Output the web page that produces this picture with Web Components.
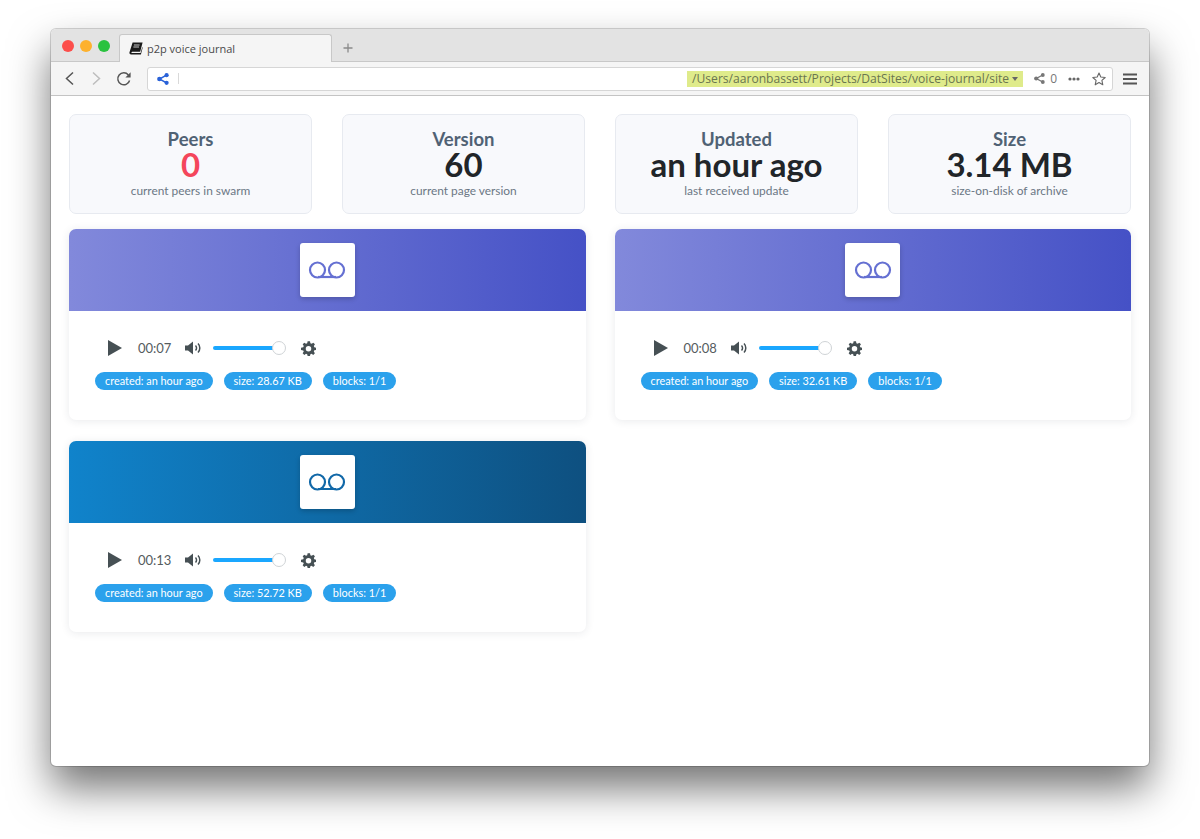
<!DOCTYPE html>
<html>
<head>
<meta charset="utf-8">
<title>p2p voice journal</title>
<style>
    html, body { margin: 0; height: 100%; background: #ffffff; overflow: hidden; }
    body { padding: 29px 51px 0; box-sizing: border-box; font-family: Lato, sans-serif; }
</style>
</head>
<body>
<browser-window>
    <stats-row>
        <stat-card heading="Peers" value="0" note="current peers in swarm" danger></stat-card>
        <stat-card heading="Version" value="60" note="current page version"></stat-card>
        <stat-card heading="Updated" value="an hour ago" note="last received update"></stat-card>
        <stat-card heading="Size" value="3.14 MB" note="size-on-disk of archive"></stat-card>
    </stats-row>
    <entry-list>
        <voice-entry time="00:07" size="28.67 KB" from="#8289db" to="#4551c6" ink="#6570d2"></voice-entry>
        <voice-entry time="00:08" size="32.61 KB" from="#8289db" to="#4551c6" ink="#6570d2"></voice-entry>
        <voice-entry time="00:13" size="52.72 KB" from="#1083cb" to="#0e5080" ink="#1168a8"></voice-entry>
    </entry-list>
</browser-window>

<script>
class BrowserWindow extends HTMLElement {
    constructor() {
        super();
        this.attachShadow({ mode: 'open' });
    }

    connectedCallback() {
        this.shadowRoot.innerHTML = `
            <style>
                :host {
                    display: flex;
                    flex-direction: column;
                    width: 1098px;
                    height: 737px;
                    background: #ffffff;
                    border-radius: 5px;
                    box-shadow: 0 0 0 1px rgba(0, 0, 0, 0.16), 0 22px 42px rgba(0, 0, 0, 0.55);
                    font-family: Lato, sans-serif;
                    overflow: hidden;
                }
                * { box-sizing: border-box; }
                svg { display: block; }

                .tabbar {
                    position: relative;
                    display: flex;
                    align-items: flex-end;
                    height: 33px;
                    flex: none;
                    padding-left: 11px;
                    background: #e3e3e3;
                    border-bottom: 1px solid #c8c8c8;
                }
                .lights { display: flex; gap: 6px; align-self: flex-start; margin-top: 11px; }
                .lights i { width: 12px; height: 12px; border-radius: 50%; }
                .tab {
                    display: flex;
                    align-items: center;
                    gap: 4px;
                    width: 213px;
                    height: 28px;
                    margin-left: 9px;
                    margin-bottom: -1px;
                    padding: 0 0 1px 9px;
                    background: #f5f5f5;
                    border: 1px solid #c8c8c8;
                    border-bottom: 0;
                    border-radius: 3px 3px 0 0;
                    font: 11px "Open Sans", sans-serif;
                    color: #4a4a4a;
                }
                .plus { margin: 0 0 8px 11px; }

                .toolbar {
                    display: flex;
                    align-items: center;
                    height: 34px;
                    flex: none;
                    padding: 0 12px 0 13px;
                    background: #f5f5f5;
                    border-bottom: 1px solid #c4c4c4;
                }
                .nav { display: flex; align-items: center; gap: 16px; }
                .nav .reload { margin-left: -2px; }
                .urlbar {
                    display: flex;
                    align-items: center;
                    width: 966px;
                    height: 24px;
                    margin-left: 15px;
                    padding: 0 6px 0 9px;
                    background: #ffffff;
                    border: 1px solid #d6d6d6;
                    border-radius: 3px;
                }
                .divider { width: 1px; height: 11px; margin-left: 9px; background: #d9d9d9; }
                .path {
                    display: flex;
                    align-items: center;
                    gap: 3px;
                    height: 16px;
                    margin-left: auto;
                    padding: 0 5px;
                    background: #dfeb8b;
                    font: 12.1px "Open Sans", sans-serif;
                    color: #6a7550;
                    white-space: nowrap;
                }
                .caret { width: 0; height: 0; border: 3.5px solid transparent; border-top: 4px solid #666; border-bottom: 0; }
                .url-actions { display: flex; align-items: center; margin-left: 11px; color: #777; font: 12px "Open Sans", sans-serif; }
                .count { margin-left: 5px; }
                .menu { margin-left: 10px; }

                .content { flex: 1; padding: 18px; overflow: hidden; }
                .content ::slotted(stats-row) { margin-bottom: 15px; }
            </style>
            <div class="tabbar">
                <div class="lights">
                    <i style="background:#fc4e4b"></i>
                    <i style="background:#fdb12d"></i>
                    <i style="background:#2ac23f"></i>
                </div>
                <div class="tab">
                    <svg width="14" height="13" viewBox="0 0 14 13">
                        <path d="M3.6 0.5H13.6L11.2 9.8H3.2C2.3 9.8 2.1 10.9 3 10.9H11.6L13.2 5.2L13.7 5.6L11.9 12.5H2.2C0.7 12.5 0.2 11.4 0.5 10.2Z" fill="#1a1a1a"/>
                        <path d="M4.9 3H10.6M4.4 5H10" stroke="#f5f5f5" stroke-width="0.8"/>
                    </svg>
                    <span>p2p voice journal</span>
                </div>
                <svg class="plus" width="10" height="10" viewBox="0 0 10 10"><path d="M5 0.5V9.5M0.5 5H9.5" stroke="#8a8a8a" stroke-width="1.3"/></svg>
            </div>
            <div class="toolbar">
                <div class="nav">
                    <svg width="11" height="15" viewBox="0 0 11 15"><path d="M9 1.5L2.5 7.5L9 13.5" fill="none" stroke="#555" stroke-width="1.5"/></svg>
                    <svg width="11" height="15" viewBox="0 0 11 15"><path d="M2 1.5L8.5 7.5L2 13.5" fill="none" stroke="#bdbdbd" stroke-width="1.5"/></svg>
                    <svg class="reload" width="16" height="16" viewBox="0 0 16 16"><path d="M13.6 9.5A6 6 0 1 1 12.4 3.9" fill="none" stroke="#555" stroke-width="1.5"/><path d="M14.6 1.2V6.4H9.4Z" fill="#555"/></svg>
                </div>
                <div class="urlbar">
                    <svg width="12" height="12" viewBox="0 0 12 12"><path d="M9.5 2.2L2.5 6L9.5 9.8" fill="none" stroke="#2a62d8" stroke-width="1.5"/><circle cx="9.6" cy="2.2" r="2.1" fill="#2a62d8"/><circle cx="2.4" cy="6" r="2.3" fill="#2a62d8"/><circle cx="9.6" cy="9.8" r="2.1" fill="#2a62d8"/></svg>
                    <span class="divider"></span>
                    <div class="path">/Users/aaronbassett/Projects/DatSites/voice-journal/site<span class="caret"></span></div>
                    <div class="url-actions">
                        <svg width="11" height="11" viewBox="0 0 12 12"><path d="M9.5 2.2L2.5 6L9.5 9.8" fill="none" stroke="#777" stroke-width="1.5"/><circle cx="9.6" cy="2.2" r="2.1" fill="#777"/><circle cx="2.4" cy="6" r="2.3" fill="#777"/><circle cx="9.6" cy="9.8" r="2.1" fill="#777"/></svg>
                        <span class="count">0</span>
                        <svg style="margin-left:11px" width="12" height="4" viewBox="0 0 12 4"><circle cx="2" cy="2" r="1.6" fill="#666"/><circle cx="6" cy="2" r="1.6" fill="#666"/><circle cx="10" cy="2" r="1.6" fill="#666"/></svg>
                        <svg style="margin-left:12px" width="14" height="14" viewBox="0 0 14 14"><path d="M7 1L8.8 5L13.2 5.5L9.9 8.4L10.8 12.8L7 10.6L3.2 12.8L4.1 8.4L0.8 5.5L5.2 5Z" fill="none" stroke="#666" stroke-width="1.1" stroke-linejoin="round"/></svg>
                    </div>
                </div>
                <svg class="menu" width="14" height="12" viewBox="0 0 14 12"><path d="M0 1.5H14M0 6H14M0 10.5H14" stroke="#555" stroke-width="2"/></svg>
            </div>
            <div class="content"><slot></slot></div>
        `;
    }
}

class StatsRow extends HTMLElement {
    constructor() {
        super();
        this.attachShadow({ mode: 'open' });
        this.shadowRoot.innerHTML = `
            <style>
                :host { display: grid; grid-template-columns: repeat(4, 1fr); column-gap: 30px; }
            </style>
            <slot></slot>
        `;
    }
}

class StatCard extends HTMLElement {
    constructor() {
        super();
        this.attachShadow({ mode: 'open' });
    }

    connectedCallback() {
        const heading = this.getAttribute('heading');
        const value = this.getAttribute('value');
        const note = this.getAttribute('note');
        const color = this.hasAttribute('danger') ? '#f4465b' : '#212529';
        this.shadowRoot.innerHTML = `
            <style>
                :host {
                    display: flex;
                    flex-direction: column;
                    align-items: center;
                    box-sizing: border-box;
                    height: 100px;
                    padding-top: 14px;
                    background: #f8f9fc;
                    border: 1px solid #e7eaf0;
                    border-radius: 7px;
                    font-family: Lato, sans-serif;
                }
                .heading { font-size: 18.5px; line-height: 21px; font-weight: 700; color: #506274; }
                .value { font-size: 33px; line-height: 29px; font-weight: 700; color: ${color}; }
                .note { margin-top: 4px; font-size: 11.9px; line-height: 15px; color: #6b7784; }
            </style>
            <div class="heading">${heading}</div>
            <div class="value">${value}</div>
            <div class="note">${note}</div>
        `;
    }
}

class EntryList extends HTMLElement {
    constructor() {
        super();
        this.attachShadow({ mode: 'open' });
        this.shadowRoot.innerHTML = `
            <style>
                :host { display: grid; grid-template-columns: repeat(2, 1fr); column-gap: 29px; row-gap: 21px; align-items: start; }
            </style>
            <slot></slot>
        `;
    }
}

class VoiceEntry extends HTMLElement {
    constructor() {
        super();
        this.attachShadow({ mode: 'open' });
    }

    connectedCallback() {
        const time = this.getAttribute('time');
        const size = this.getAttribute('size');
        const from = this.getAttribute('from');
        const to = this.getAttribute('to');
        const ink = this.getAttribute('ink');
        this.shadowRoot.innerHTML = `
            <style>
                :host {
                    display: block;
                    height: 191px;
                    background: #ffffff;
                    border-radius: 7px;
                    box-shadow: 0 1px 8px rgba(40, 50, 70, 0.1);
                    font-family: Lato, sans-serif;
                    overflow: hidden;
                }
                svg { display: block; }
                .banner {
                    display: flex;
                    align-items: center;
                    justify-content: center;
                    height: 82px;
                    background: linear-gradient(90deg, ${from}, ${to});
                }
                .logo {
                    display: flex;
                    align-items: center;
                    justify-content: center;
                    width: 55px;
                    height: 54px;
                    background: #ffffff;
                    border-radius: 3px;
                    box-shadow: 0 2px 5px rgba(0, 0, 0, 0.2);
                }
                .body { padding: 23px 26px 0; }
                .player { display: flex; align-items: center; height: 28px; color: #555c60; }
                .play { margin-left: 13px; }
                .time { margin-left: 16px; width: 33px; font-size: 13px; }
                .volume { margin-left: 14px; }
                .track { position: relative; width: 66px; height: 4px; margin-left: 10px; background: #1aa7ff; border-radius: 2px; }
                .knob {
                    position: absolute;
                    right: -7px;
                    top: -5px;
                    width: 14px;
                    height: 14px;
                    box-sizing: border-box;
                    background: #ffffff;
                    border: 1px solid #cfd3d6;
                    border-radius: 50%;
                }
                .gear { margin-left: 22px; }
                .tags { display: flex; gap: 11px; margin-top: 10px; }
                .tag {
                    height: 18px;
                    padding: 0 10px;
                    background: #2ba1ec;
                    border-radius: 9px;
                    font-size: 10.9px;
                    line-height: 18px;
                    font-weight: 400;
                    color: #ffffff;
                    white-space: nowrap;
                }
            </style>
            <div class="banner">
                <div class="logo">
                    <svg width="38" height="18" viewBox="0 0 38 18">
                        <path d="M10 16H28" fill="none" stroke="${ink}" stroke-width="2.2"/>
                        <circle cx="9.5" cy="9" r="7.5" fill="none" stroke="${ink}" stroke-width="2.2"/>
                        <circle cx="28.5" cy="9" r="7.5" fill="none" stroke="${ink}" stroke-width="2.2"/>
                    </svg>
                </div>
            </div>
            <div class="body">
                <div class="player">
                    <svg class="play" width="14" height="16" viewBox="0 0 14 16"><path d="M0 0L14 8L0 16Z" fill="#465054"/></svg>
                    <span class="time">${time}</span>
                    <svg class="volume" width="18" height="14" viewBox="0 0 18 14">
                        <path d="M0 4.5H3L8 0.5V13.5L3 9.5H0Z" fill="#465054"/>
                        <path d="M10.5 4.5A3.5 3.5 0 0 1 10.5 9.5M13 2.5A6.5 6.5 0 0 1 13 11.5" fill="none" stroke="#465054" stroke-width="1.5"/>
                    </svg>
                    <div class="track"><span class="knob"></span></div>
                    <svg class="gear" width="15" height="15" viewBox="0 0 24 24"><path fill-rule="evenodd" d="M14.4 0.5L15 3.7L17 4.5L19.7 2.7L22.3 5.3L20.5 8L21.3 10L24 10.6V14.2L21.3 14.9L20.5 16.8L22.2 19.5L19.6 22.2L16.9 20.5L15 21.3L14.4 24H10.6L9.9 21.3L8 20.5L5.3 22.2L2.6 19.6L4.4 16.9L3.6 15L0 14.4V10.6L3.6 9.9L4.4 8L2.7 5.3L5.3 2.7L8 4.5L9.9 3.7L10.6 0.5ZM12 7.8A4.4 4.4 0 1 0 12 16.6A4.4 4.4 0 1 0 12 7.8Z" fill="#465054"/></svg>
                </div>
                <div class="tags">
                    <span class="tag">created: an hour ago</span>
                    <span class="tag">size: ${size}</span>
                    <span class="tag">blocks: 1/1</span>
                </div>
            </div>
        `;
    }
}

customElements.define('browser-window', BrowserWindow);
customElements.define('stats-row', StatsRow);
customElements.define('stat-card', StatCard);
customElements.define('entry-list', EntryList);
customElements.define('voice-entry', VoiceEntry);
</script>
</body>
</html>
